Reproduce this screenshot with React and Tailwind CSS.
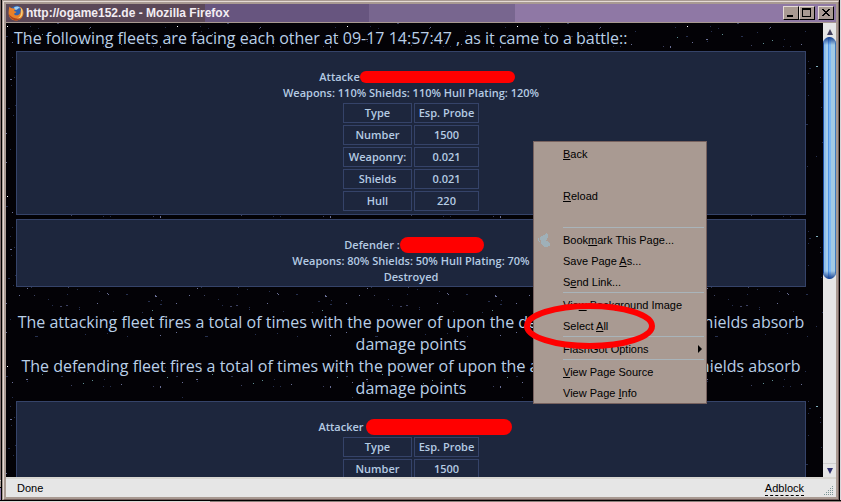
import React from 'react'

// [x, y, width, colour] inside one 170x170 tile of the sky
const DIM = '#26304f'
const MID = '#6a6f96'
const TEAL = '#5f8f92'
const STARS = [
  [1, 3, 1, '#ffffff'], [24, 3, 1, DIM], [32, 5, 1, DIM], [51, 0, 2, '#3d4262'], [84, 4, 1, MID], [83, 5, 1, '#3d4262'],
  [71, 9, 1, DIM], [159, 4, 1, DIM], [0, 13, 2, DIM], [161, 14, 1, TEAL], [6, 19, 1, MID], [36, 11, 1, TEAL],
  [25, 8, 1, DIM], [20, 16, 2, MID], [21, 18, 1, DIM], [55, 13, 2, DIM], [77, 20, 1, TEAL], [86, 17, 1, TEAL],
  [65, 22, 1, '#3d4262'], [115, 21, 1, MID], [98, 16, 1, DIM], [119, 8, 1, DIM], [97, 23, 1, DIM], [104, 23, 1, DIM],
  [147, 23, 1, '#3d4262'], [154, 23, 1, MID], [154, 24, 1, MID], [6, 34, 1, DIM], [122, 38, 1, DIM], [4, 43, 1, DIM],
  [130, 43, 2, '#7fb0bd'], [123, 45, 2, DIM], [122, 50, 1, DIM], [8, 54, 1, DIM], [134, 54, 1, DIM], [4, 56, 2, MID],
  [134, 59, 1, DIM], [5, 62, 1, DIM], [122, 72, 1, DIM], [9, 82, 1, DIM], [135, 84, 1, DIM], [2, 85, 2, DIM],
  [7, 92, 1, DIM], [21, 95, 1, MID], [25, 94, 1, DIM], [62, 94, 1, '#3d4262'], [71, 96, 1, DIM], [93, 98, 1, DIM],
  [61, 101, 1, DIM], [13, 102, 1, MID], [28, 102, 1, '#3d4262'], [42, 106, 1, DIM], [101, 100, 1, MID], [102, 101, 1, MID],
  [120, 101, 2, DIM], [149, 102, 1, MID], [149, 103, 2, MID], [142, 108, 2, DIM], [155, 107, 1, DIM], [154, 111, 2, DIM],
  [0, 110, 1, MID], [91, 110, 1, MID], [46, 112, 1, DIM], [54, 113, 2, '#3d4262'], [60, 112, 2, '#3d4262'], [73, 114, 1, DIM],
  [73, 116, 1, DIM], [146, 117, 1, TEAL], [107, 118, 1, DIM], [136, 119, 1, DIM], [4, 126, 1, DIM], [130, 133, 1, DIM],
  [0, 139, 1, MID], [101, 140, 1, DIM], [79, 141, 1, DIM], [154, 142, 1, MID], [29, 143, 3, DIM], [121, 143, 1, DIM],
]

function Sky() {
  return (
    <svg className="absolute inset-0 h-full w-full" shapeRendering="crispEdges" aria-hidden="true">
      <defs>
        <pattern id="sky" width="170" height="170" patternUnits="userSpaceOnUse">
          {STARS.map(([x, y, w, fill], i) => <rect key={i} x={x} y={y} width={w} height="1" fill={fill} />)}
        </pattern>
      </defs>
      <rect width="100%" height="100%" fill="url(#sky)" />
    </svg>
  )
}

function FirefoxIcon() {
  return (
    <svg viewBox="0 0 16 16" className="h-4 w-4 shrink-0" aria-hidden="true">
      <circle cx="8.500" cy="7.500" r="6.800" fill="#2f62b0" />
      <path d="M6 2.500C8 1 11 1 12 3c-1 .4-2 .2-2.600 1.200C9 5 8 5 6.500 4.500z" fill="#9fd0f2" />
      <path d="M1.500 1.500c.6 1 1.500 1.500 2.500 1.700 1.500-.2 2.500.2 3.200 1L6 6c1 .6 2 .5 2.500.8-.4 1.200-2 1.200-2.500 2.200.8 1.500 3 1.700 5 .4 1-.7 1.800-2.200 1.500-4C13.500 6 13 3.500 11.500 1.500 15 3 16 6.500 15.300 9.500 14.300 13.300 11.300 15.500 8 15.500 3.500 15.500.500 12 .600 8 .700 5.500.900 3.500 1.500 1.500z" fill="#e8802a" />
      <path d="M12.500 2.300c2.200 2 2.800 5 1.600 8.200C13 12.500 11 13.600 9 13.500c3-1 5.500-4.500 3.500-11.200z" fill="#f6d27a" />
      <path d="M.8 9c.8 3.500 3.700 6.200 7.200 6.400 2 0 4-1 5.500-2.500C9 14.800 4 13 .8 9z" fill="#a8431f" />
    </svg>
  )
}

function CaptionButton({ label, children }) {
  return (
    <button type="button" aria-label={label} className="flex h-3.5 w-4 items-center justify-center border border-t-[#e4dad5] border-l-[#e4dad5] border-r-black border-b-black bg-[#a99a92]">
      <svg viewBox="0 0 12 10" className="h-2.5 w-3" shapeRendering="crispEdges">{children}</svg>
    </button>
  )
}

function TitleBar() {
  return (
    <header className="flex h-[18px] items-center bg-[linear-gradient(90deg,#5b4858_0_24%,#67557f_24%_43.7%,#78668f_43.7%_61.3%,#8f78a5_61.3%)] pl-0.5">
      <FirefoxIcon />
      <h1 className="ml-0.5 flex-1 truncate text-[12px] leading-4 font-bold text-[#f3edf3]">http://ogame152.de - Mozilla Firefox</h1>
      <div className="flex pr-0.5">
        <CaptionButton label="Minimize"><path d="M2 7h6v2H2z" /></CaptionButton>
        <CaptionButton label="Maximize"><path d="M1 0h9v9H1zM2 2v6h7V2z" fillRule="evenodd" /></CaptionButton>
        <span className="w-[3px]" />
        <CaptionButton label="Close">
          <path d="M2 1h2v1h1v1h2V2h1V1h2v1H9v1H8v1H7v1h1v1h1v1h1v1H8V7H7V6H5v1H4v1H2V7h1V6h1V5h1V4H4V3H3V2H2z" />
        </CaptionButton>
      </div>
    </header>
  )
}

function ScrollBar() {
  return (
    <div className="flex w-[13px] shrink-0 flex-col bg-[#e6e6e6]">
      <button type="button" aria-label="Scroll up" className="flex h-3.5 items-end justify-center pb-0.5">
        <svg viewBox="0 0 6 6" className="h-1.5 w-1.5"><path d="M3 0l3 6H0z" fill="#44405c" /></svg>
      </button>
      <div className="relative h-[242px] overflow-hidden rounded-full bg-[linear-gradient(90deg,#1d4fa8_0_8%,#8fc0ea_8%_24%,#a5cdec_24%_36%,#4f95e6_36%_46%,#7fb8f4_46%_62%,#a3c9e4_62%_92%,#3d79c0_92%)]">
        <div className="absolute inset-x-0 top-0 h-2 bg-linear-to-b from-[#123a8c] to-transparent" />
        <div className="absolute inset-x-0 bottom-0 h-2 bg-linear-to-t from-[#123a8c] to-transparent" />
      </div>
      <button type="button" aria-label="Scroll down" className="mt-auto flex h-3.5 items-center justify-center border-t border-[#cfcfcf]">
        <svg viewBox="0 0 6 6" className="h-1.5 w-1.5"><path d="M3 6l3-6H0z" fill="#2f3070" /></svg>
      </button>
    </div>
  )
}

const ROWS = [
  ['Type', 'Esp. Probe'],
  ['Number', '1500'],
  ['Weaponry:', '0.021'],
  ['Shields', '0.021'],
  ['Hull', '220'],
]

function FleetTable({ rows }) {
  return (
    <table className="mx-auto border-separate border-spacing-0.5">
      <tbody>
        {rows.map(([name, value]) => (
          <tr key={name}>
            <th className="h-5 w-[69px] border border-[#354369] p-0 leading-4 font-semibold">{name}</th>
            <td className="h-5 w-[65px] border border-[#354369] p-0 text-center leading-4">{value}</td>
          </tr>
        ))}
      </tbody>
    </table>
  )
}

function Panel({ children }) {
  return (
    <section className="border border-[#354369] bg-[#1d263d] px-px pt-[17px] pb-px text-center text-[11px] leading-4 font-semibold text-[#b5cbe3]">
      {children}
    </section>
  )
}

function Report() {
  return (
    <main className="relative h-full overflow-hidden pr-[17px] pl-2.5">
      <p className="-ml-0.5 pt-1 pb-0.5 text-[16px] leading-[22px]">The following fleets are facing each other at 09-17 14:57:47 , as it came to a battle::</p>
      <div className="flex flex-col gap-1">
        <Panel>
          <p className="flex items-center justify-center">
            Attacke<span className="-mr-3 h-3 w-[155px] rounded-full bg-[#ff0000]" />
          </p>
          <p>Weapons: 110% Shields: 110% Hull Plating: 120%</p>
          <FleetTable rows={ROWS} />
        </Panel>
        <Panel>
          <p className="flex items-center justify-center">
            Defender :<span className="-mr-1.5 h-4 w-[84px] rounded-full bg-[#ff0000]" />
          </p>
          <p>Weapons: 80% Shields: 50% Hull Plating: 70%</p>
          <p>Destroyed</p>
        </Panel>
      </div>
      <p className="pt-6 text-center text-[16px] leading-[22px]">
        The attacking fleet fires a total of times with the power of upon the defender, the defender shields absorb damage points
      </p>
      <p className="pb-0.5 text-center text-[16px] leading-[22px]">
        The defending fleet fires a total of times with the power of upon the attacker, the attacker shields absorb damage points
      </p>
      <Panel>
        <p className="flex items-center justify-center">
          Attacker<span className="-mr-2 ml-0.5 h-4 w-[146px] rounded-full bg-[#ff0000]" />
        </p>
        <FleetTable rows={ROWS.slice(0, 2)} />
      </Panel>
    </main>
  )
}

function Item({ children }) {
  return (
    <li>
      <button type="button" className="flex h-[21px] w-full items-center justify-between pr-1 pl-[29px] text-left whitespace-nowrap">{children}</button>
    </li>
  )
}

function Rule() {
  return <li role="separator" className="mr-0.5 ml-[29px] h-0.5 border-t border-[#a9b4ba]" />
}

function ContextMenu() {
  return (
    <ul className="absolute top-[118px] left-[527px] w-[174px] border border-[#77625f] bg-[#a99a92] pt-px text-[11px] leading-4 text-black">
      <Item><span><u>B</u>ack</span></Item>
      <li className="h-[21px]" />
      <Item><span><u>R</u>eload</span></Item>
      <li className="h-[21px]" />
      <Rule />
      <li className="relative">
        <svg viewBox="0 0 12 14" className="absolute top-1 left-1 h-3.5 w-3" fill="#9fb0b8" shapeRendering="crispEdges" aria-hidden="true">
          <path d="M8 0h1v1h1v4H9v2H8v1h2v1h1v1h1v3h-2v1H6v-1H5v-1H4v-1H3V7H2V4h1V3h2V2h2V1h1zM0 5h1v3H0zM1 8h1v1H1z" />
        </svg>
        <button type="button" className="flex h-[21px] w-full items-center pl-[29px]"><span>Book<u>m</u>ark This Page...</span></button>
      </li>
      <Item><span>Save Page <u>A</u>s...</span></Item>
      <Item><span>S<u>e</u>nd Link...</span></Item>
      <Rule />
      <Item><span>Vie<u>w</u> Background Image</span></Item>
      <Item><span>Select <u>A</u>ll</span></Item>
      <Rule />
      <Item>
        <span>FlashGot Options</span>
        <svg viewBox="0 0 4 8" className="h-2 w-1"><path d="M0 0l4 4-4 4z" /></svg>
      </Item>
      <Rule />
      <Item><span><u>V</u>iew Page Source</span></Item>
      <Item><span>View Page <u>I</u>nfo</span></Item>
    </ul>
  )
}

export default function App() {
  return (
    <div className="flex h-screen flex-col bg-black font-['Liberation_Sans',sans-serif]">
      <div className="flex min-h-0 flex-1">
        {/* edge of the window behind */}
        <div className="mr-px flex w-px flex-col bg-[#826e6c]">
          <div className="mt-auto h-2 border-y border-t-[#d8d0cc] border-b-black bg-[#a99a92]" />
          <div className="h-3 bg-[#8f78a5]" />
        </div>
        <div className="flex min-w-0 flex-1 flex-col border-t border-l border-[#a99a92]">
          <div className="flex min-h-0 flex-1 flex-col border-t border-r border-b border-l border-t-[#e4dad5] border-r-[#77625f] border-b-[#77625f] border-l-[#e4dad5]">
            <div className="flex min-h-0 flex-1 flex-col border-2 border-[#a99a92]">
              <TitleBar />
              <div className="flex min-h-0 flex-1 border-t border-[#a99a92]">
                <div className="relative min-w-0 flex-1 bg-[#030206] text-[#b9cfe6]">
                  <Sky />
                  <div className="absolute inset-0 overflow-hidden font-['Open_Sans',sans-serif]">
                    <Report />
                  </div>
                  <ContextMenu />
                  <svg viewBox="0 0 132 48" className="absolute top-[279px] left-[518px] h-12 w-[132px]" aria-hidden="true">
                    <ellipse cx="65.500" cy="24" rx="62.500" ry="20" fill="none" stroke="#ff0000" strokeWidth="6" />
                  </svg>
                </div>
                <ScrollBar />
              </div>
              <footer className="flex h-5 items-center justify-between border-t-2 border-[#d9d7d2] bg-[#e6e6e6] pr-0.5 pl-[11px] text-[11px] leading-4 text-black">
                <span>Done</span>
                <div className="flex items-end gap-5">
                  <a href="#adblock" className="border-b border-dashed border-black leading-[14px]">Adblock</a>
                  <svg viewBox="0 0 10 10" className="h-2.5 w-2.5" fill="#7d9696" shapeRendering="crispEdges" aria-hidden="true">
                    <path d="M8 0h1v1H8zM6 2h1v1H6zM8 2h1v1H8zM4 4h1v1H4zM6 4h1v1H6zM8 4h1v1H8zM2 6h1v1H2zM4 6h1v1H4zM6 6h1v1H6zM8 6h1v1H8zM0 8h1v1H0zM2 8h1v1H2zM4 8h1v1H4zM6 8h1v1H6zM8 8h1v1H8z" />
                  </svg>
                </div>
              </footer>
            </div>
          </div>
        </div>
        <div className="ml-px w-px bg-[#d9d7da]" />
      </div>
      <div className="mt-px flex h-px">
        <div className="w-1/4 bg-[#dcdad6]" />
        <div className="flex-1 bg-[#8d807b]" />
      </div>
    </div>
  )
}
